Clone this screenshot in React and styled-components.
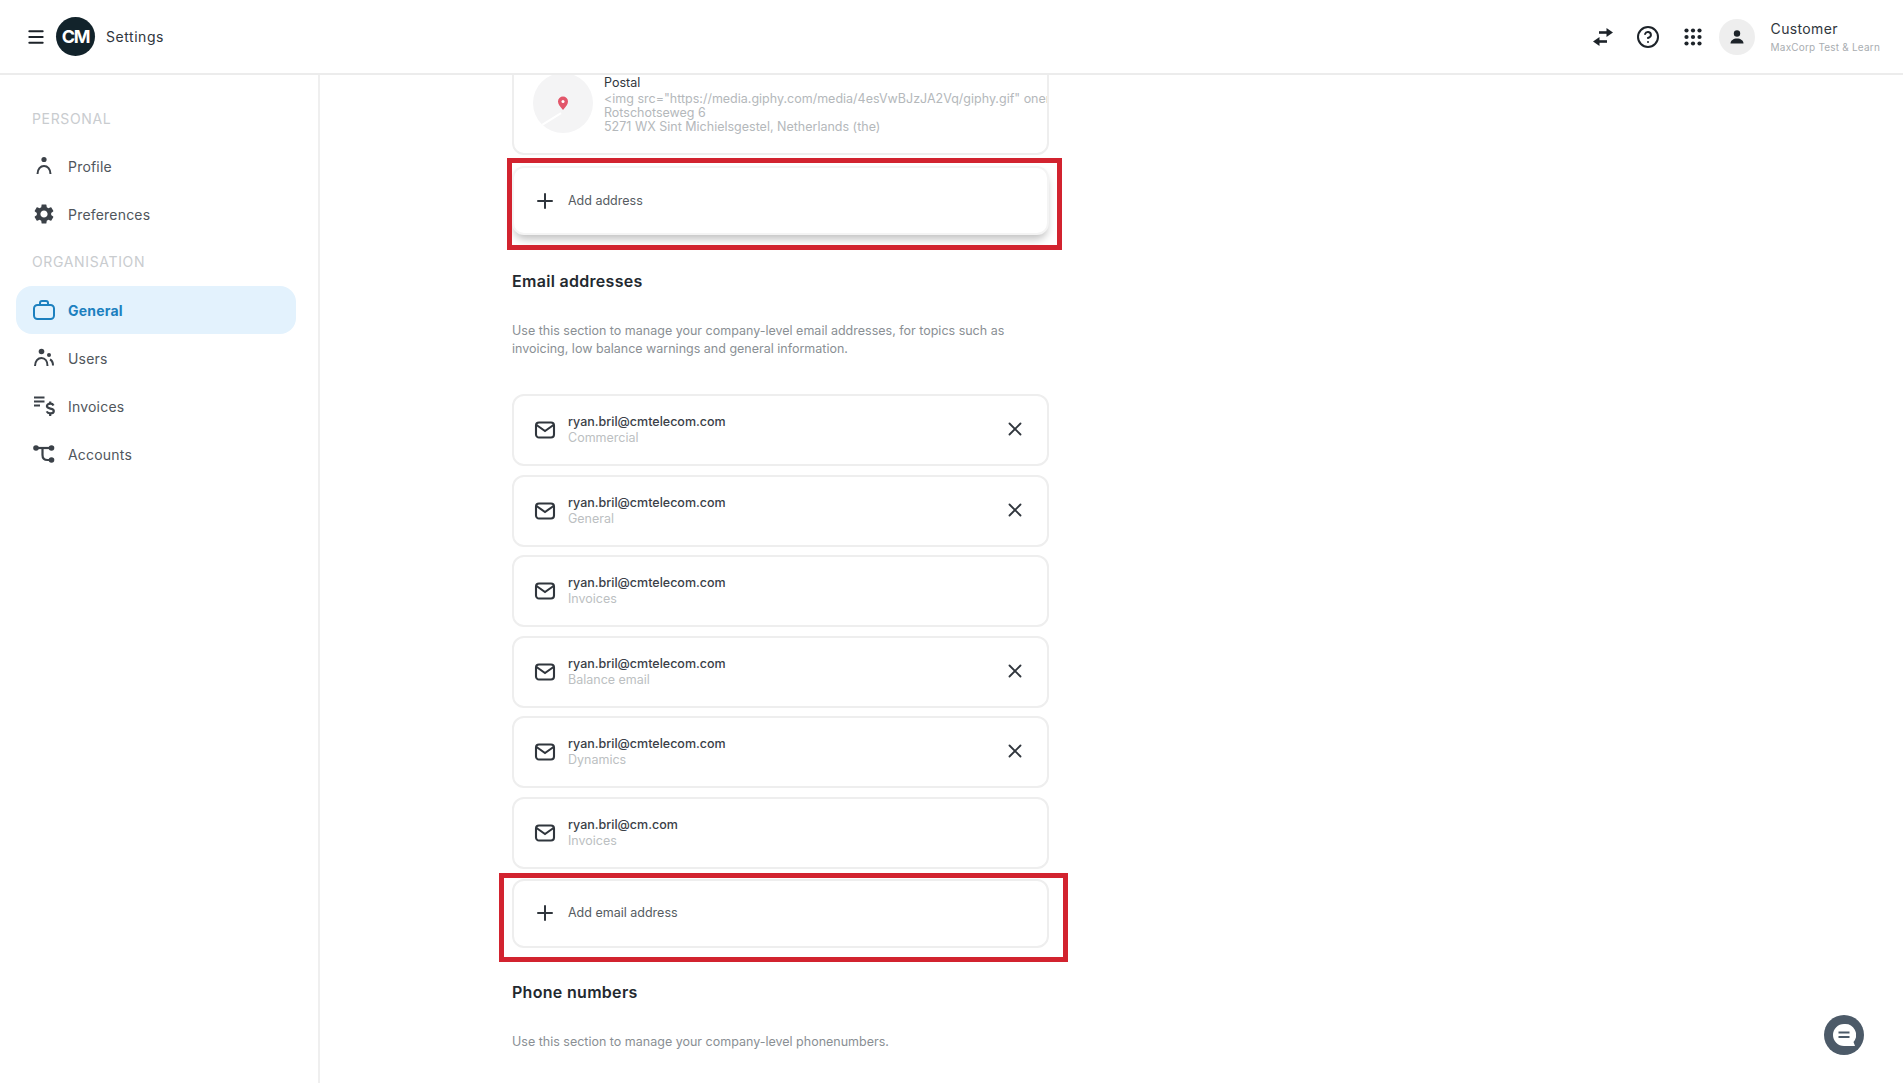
import React from "react";
import styled, { createGlobalStyle } from "styled-components";
import { Plus, X, CircleHelp, Menu } from "lucide-react";
import { MdSettings } from "react-icons/md";

const GlobalStyle = createGlobalStyle`
  html, body {
    margin: 0;
    height: 100%;
    overflow: hidden;
    background: #fff;
    font-family: Inter, "Noto Sans", sans-serif;
    color: #30363d;
  }
  * { box-sizing: border-box; }
`;

const Page = styled.div`
  height: 1083px;
  display: flex;
  flex-direction: column;
  overflow: hidden;
`;

const Header = styled.header`
  height: 75px;
  flex: none;
  display: flex;
  align-items: center;
  padding: 0 23px 0 26px;
  border-bottom: 2px solid #ececec;
`;

const MenuButton = styled.div`
  width: 20px;
  display: flex;
  color: #1d2329;
  margin-right: 10px;
`;

const Logo = styled.div`
  width: 39px;
  height: 39px;
  border-radius: 50%;
  background: #12232b;
  color: #fff;
  font-size: 18px;
  font-weight: 700;
  letter-spacing: -1.2px;
  display: flex;
  align-items: center;
  justify-content: center;
  margin-right: 11px;
`;

const AppName = styled.span`
  font-size: 14px;
  letter-spacing: 0.55px;
  color: #30363d;
`;

const HeaderRight = styled.div`
  margin-left: auto;
  display: flex;
  align-items: center;
`;

const HeaderIcon = styled.div`
  width: 45px;
  display: flex;
  justify-content: center;
  color: #1d2329;
`;

const Avatar = styled.div`
  width: 36px;
  height: 36px;
  border-radius: 50%;
  background: #eeeeee;
  display: flex;
  align-items: center;
  justify-content: center;
  margin: 0 16px 0 3px;
`;

const UserBlock = styled.div`
  display: flex;
  flex-direction: column;
  gap: 4px;
`;

const UserName = styled.span`
  font-size: 14px;
  letter-spacing: 0.35px;
  color: #30363d;
`;

const UserOrg = styled.span`
  font-size: 10px;
  letter-spacing: 0.2px;
  color: #a9adb1;
`;

const Body = styled.div`
  flex: 1;
  display: flex;
  min-height: 0;
`;

const Sidebar = styled.nav`
  width: 320px;
  flex: none;
  border-right: 2px solid #efefef;
  padding: 35px 22px 0 16px;
`;

const GroupLabel = styled.div`
  font-size: 14px;
  line-height: 18px;
  letter-spacing: 0.65px;
  color: #c9cccf;
  padding-left: 16px;
  margin-bottom: ${({ $tight }) => ($tight ? "15px" : "14px")};
  margin-top: ${({ $tight }) => ($tight ? "15px" : "0")};
`;

const NavItem = styled.div`
  height: 48px;
  display: flex;
  align-items: center;
  padding-left: 16px;
  gap: 12px;
  border-radius: 16px;
  font-size: 14px;
  letter-spacing: 0.2px;
  background: ${({ $active }) => ($active ? "#e3f2fd" : "transparent")};
  color: ${({ $active }) => ($active ? "#1c80bf" : "#50565c")};
  font-weight: ${({ $active }) => ($active ? 700 : 400)};
`;

const NavIcon = styled.span`
  width: 24px;
  height: 24px;
  display: flex;
  align-items: center;
  justify-content: center;
  color: ${({ $active }) => ($active ? "#1c80bf" : "#3b4148")};
`;

const Main = styled.main`
  flex: 1;
  min-width: 0;
  overflow: hidden;
  padding-left: 192px;
`;

const Column = styled.div`
  width: 537px;
  margin-top: -24px;
`;

const Card = styled.div`
  position: relative;
  height: ${({ $height }) => $height || "72px"};
  border: 2px solid #eeeeee;
  border-radius: 12px;
  background: #fff;
  display: flex;
  align-items: center;
  padding: 0 19px;
`;

const PostalCard = styled(Card)`
  padding: 0 0 0 19px;
  overflow: hidden;
  margin-bottom: 11px;
`;

const RaisedCard = styled(Card)`
  border-color: #f4f4f4;
  box-shadow: 0 6px 8px -2px rgba(0, 0, 0, 0.25);
`;

const MapCircle = styled.div`
  position: relative;
  width: 60px;
  height: 60px;
  flex: none;
  border-radius: 50%;
  background: #f4f4f5;
  overflow: hidden;
  display: flex;
  align-items: center;
  justify-content: center;
  margin-right: 11px;

  &::after {
    content: "";
    position: absolute;
    left: 4px;
    top: 46px;
    width: 26px;
    height: 2px;
    background: #fff;
    transform: rotate(-32deg);
  }
`;

const PostalText = styled.div`
  min-width: 0;
  white-space: nowrap;
  font-size: 12.5px;
  line-height: 14px;
  color: #b4b8bb;
  padding-top: 3px;
`;

const PostalTitle = styled.div`
  color: #30363d;
  font-size: 12.5px;
  margin-bottom: 2px;
`;

const CardIcon = styled.span`
  width: 24px;
  height: 24px;
  flex: none;
  display: flex;
  align-items: center;
  justify-content: center;
  color: #30363d;
  margin-right: 11px;
`;

const AddLabel = styled.span`
  font-size: 12.5px;
  color: #565c62;
  padding-bottom: ${({ $lift }) => ($lift ? "2px" : "0")};
`;

const Highlight = styled.div`
  position: absolute;
  top: ${({ $top }) => $top}px;
  right: ${({ $right }) => $right}px;
  bottom: ${({ $bottom }) => $bottom}px;
  left: ${({ $left }) => $left}px;
  border: 5px solid #d2232f;
  pointer-events: none;
`;

const Heading = styled.h2`
  margin: ${({ $top }) => $top}px 0 30px;
  font-size: 16px;
  line-height: 22px;
  font-weight: 600;
  letter-spacing: 0.3px;
  color: #23292f;
`;

const Description = styled.p`
  margin: 0 0 36px;
  font-size: 12.5px;
  line-height: 18px;
  color: #8a8f94;
`;

const EmailList = styled.div`
  display: flex;
  flex-direction: column;
  gap: 8.6px;
  margin-bottom: 10px;
`;

const EmailText = styled.div`
  flex: 1;
  display: flex;
  flex-direction: column;
  gap: 1px;
  padding-bottom: 1px;
`;

const EmailAddress = styled.span`
  font-size: 12.5px;
  line-height: 15px;
  font-weight: 500;
  color: #3a4047;
`;

const EmailType = styled.span`
  font-size: 12.5px;
  line-height: 15px;
  color: #bcbfc2;
`;

const RemoveButton = styled.span`
  display: flex;
  color: #30363d;
  margin: 0 2px 2px 0;
`;

const ChatButton = styled.div`
  position: fixed;
  left: 1824px;
  top: 1015px;
  width: 40px;
  height: 40px;
  border-radius: 50%;
  background: #4c5a68;
  display: flex;
  align-items: center;
  justify-content: center;
`;

const SwapIcon = () => (
  <svg width="20" height="20" viewBox="0 0 20 20" fill="none" stroke="currentColor" strokeWidth="2.6">
    <path d="M6 5.500h9" />
    <path d="M14 14.500H5" />
    <path d="M13.500 1l6.500 4.500-6.500 4.500z" fill="currentColor" strokeWidth="0" />
    <path d="M6.500 10L0 14.500 6.500 19z" fill="currentColor" strokeWidth="0" />
  </svg>
);

const GridIcon = () => (
  <svg width="18" height="18" viewBox="0 0 18 18" fill="currentColor">
    {[2.5, 9, 15.5].flatMap((y) =>
      [2.5, 9, 15.5].map((x) => <circle key={`${x}-${y}`} cx={x} cy={y} r="2.1" />)
    )}
  </svg>
);

const SolidUserIcon = () => (
  <svg width="18" height="18" viewBox="0 0 18 18" fill="#1d2329">
    <circle cx="9" cy="5.500" r="3.200" />
    <path d="M2.500 15.500c0-3 3-5 6.500-5s6.500 2 6.500 5z" />
  </svg>
);

const PersonIcon = () => (
  <svg width="22" height="22" viewBox="0 0 22 22" fill="none" stroke="currentColor" strokeWidth="2">
    <circle cx="11" cy="4.500" r="2.600" fill="currentColor" stroke="none" />
    <path d="M4.500 19c0-5 3-8 6.500-8s6.500 3 6.500 8" />
  </svg>
);

const UsersIcon = () => (
  <svg width="22" height="22" viewBox="0 0 22 22" fill="none" stroke="currentColor" strokeWidth="2">
    <circle cx="8.500" cy="4.500" r="2.800" fill="currentColor" stroke="none" />
    <circle cx="16" cy="8" r="2" fill="currentColor" stroke="none" />
    <path d="M2 19c0-5 3-8 6.500-8s6 3 6 8" />
    <path d="M17 12.500c2 1 3 3.500 3 6" />
  </svg>
);

const InvoiceIcon = () => (
  <svg width="22" height="24" viewBox="0 0 22 24" fill="none" stroke="currentColor" strokeWidth="2">
    <path d="M1 3.500h10.500M1 7.500h10.500M1 11.500h6" />
    <path d="M20.500 11.500c-.5-1.200-1.700-1.800-3.300-1.800-1.900 0-3.300.9-3.300 2.400 0 3.400 6.900 1.600 6.900 4.900 0 1.500-1.500 2.400-3.500 2.400-1.700 0-3-.7-3.600-2" strokeWidth="2.200" />
    <path d="M17.200 7.500v2.200M17.200 19.800V22" strokeWidth="2.200" />
  </svg>
);

const AccountsIcon = () => (
  <svg width="22" height="22" viewBox="0 0 22 22" fill="none" stroke="currentColor" strokeWidth="2.200">
    <circle cx="3" cy="5" r="2.800" fill="currentColor" stroke="none" />
    <circle cx="18.500" cy="5" r="2.800" fill="currentColor" stroke="none" />
    <circle cx="18.500" cy="17" r="2.800" fill="currentColor" stroke="none" />
    <path d="M3 5h15.500" />
    <path d="M9.500 5v7c0 3 2 5 5 5h4" />
  </svg>
);

const BriefcaseIcon = () => (
  <svg width="22" height="22" viewBox="0 0 22 22" fill="none" stroke="currentColor" strokeWidth="2">
    <rect x="1" y="6" width="20" height="14" rx="3.500" />
    <path d="M7 6V4c0-1 .7-2 2-2h4c1.300 0 2 1 2 2v2" />
  </svg>
);

const MailIcon = () => (
  <svg width="22" height="22" viewBox="0 0 22 22" fill="none" stroke="currentColor" strokeWidth="2.100">
    <rect x="2" y="3.500" width="18" height="15" rx="3" />
    <path d="M2.500 6l8.500 6 8.500-6" />
  </svg>
);

const PinIcon = () => (
  <svg width="12" height="14" viewBox="0 0 12 14">
    <path d="M6 14C3 10.500 1 8.500 1 5.500a5 5 0 0 1 10 0C11 8.500 9 10.500 6 14z" fill="#e2566a" />
    <circle cx="6" cy="5.500" r="1.500" fill="#fff" />
  </svg>
);

const ChatIcon = () => (
  <svg width="24" height="24" viewBox="0 0 24 24">
    <path d="M12 1a11 11 0 1 0 0 22h11l-1.500-4A11 11 0 0 0 12 1z" fill="#fff" />
    <path d="M6.500 9.500h11M6.500 14h11" stroke="#4c5a68" strokeWidth="2.200" />
  </svg>
);

const emails = [
  { address: "ryan.bril@cmtelecom.com", type: "Commercial", removable: true },
  { address: "ryan.bril@cmtelecom.com", type: "General", removable: true },
  { address: "ryan.bril@cmtelecom.com", type: "Invoices", removable: false },
  { address: "ryan.bril@cmtelecom.com", type: "Balance email", removable: true },
  { address: "ryan.bril@cmtelecom.com", type: "Dynamics", removable: true },
  { address: "ryan.bril@cm.com", type: "Invoices", removable: false },
];

const App = () => {
  return (
    <Page>
      <GlobalStyle />
      <Header>
        <MenuButton>
          <Menu size={20} strokeWidth={2.4} />
        </MenuButton>
        <Logo>CM</Logo>
        <AppName>Settings</AppName>
        <HeaderRight>
          <HeaderIcon>
            <SwapIcon />
          </HeaderIcon>
          <HeaderIcon>
            <CircleHelp size={24} strokeWidth={2} />
          </HeaderIcon>
          <HeaderIcon>
            <GridIcon />
          </HeaderIcon>
          <Avatar>
            <SolidUserIcon />
          </Avatar>
          <UserBlock>
            <UserName>Customer</UserName>
            <UserOrg>MaxCorp Test &amp; Learn</UserOrg>
          </UserBlock>
        </HeaderRight>
      </Header>
      <Body>
        <Sidebar>
          <GroupLabel>PERSONAL</GroupLabel>
          <NavItem>
            <NavIcon>
              <PersonIcon />
            </NavIcon>
            Profile
          </NavItem>
          <NavItem>
            <NavIcon>
              <MdSettings size={24} />
            </NavIcon>
            Preferences
          </NavItem>
          <GroupLabel $tight>ORGANISATION</GroupLabel>
          <NavItem $active>
            <NavIcon $active>
              <BriefcaseIcon />
            </NavIcon>
            General
          </NavItem>
          <NavItem>
            <NavIcon>
              <UsersIcon />
            </NavIcon>
            Users
          </NavItem>
          <NavItem>
            <NavIcon>
              <InvoiceIcon />
            </NavIcon>
            Invoices
          </NavItem>
          <NavItem>
            <NavIcon>
              <AccountsIcon />
            </NavIcon>
            Accounts
          </NavItem>
        </Sidebar>
        <Main>
          <Column>
            <PostalCard $height="104px">
              <MapCircle>
                <PinIcon />
              </MapCircle>
              <PostalText>
                <PostalTitle>Postal</PostalTitle>
                <div>&lt;img src="https://media.giphy.com/media/4esVwBJzJA2Vq/giphy.gif" onerror="alert(1)"&gt;</div>
                <div>Rotschotseweg 6</div>
                <div>5271 WX Sint Michielsgestel, Netherlands (the)</div>
              </PostalText>
            </PostalCard>
            <RaisedCard $height="69px">
              <CardIcon>
                <Plus size={24} strokeWidth={2} />
              </CardIcon>
              <AddLabel>Add address</AddLabel>
              <Highlight $top={-10} $right={-15} $bottom={-17} $left={-7} />
            </RaisedCard>

            <Heading $top={35}>Email addresses</Heading>
            <Description>
              Use this section to manage your company-level email addresses, for topics such as
              <br />
              invoicing, low balance warnings and general information.
            </Description>
            <EmailList>
              {emails.map((email, index) => (
                <Card key={index}>
                  <CardIcon>
                    <MailIcon />
                  </CardIcon>
                  <EmailText>
                    <EmailAddress>{email.address}</EmailAddress>
                    <EmailType>{email.type}</EmailType>
                  </EmailText>
                  {email.removable && (
                    <RemoveButton>
                      <X size={22} strokeWidth={2} />
                    </RemoveButton>
                  )}
                </Card>
              ))}
            </EmailList>
            <Card $height="69px">
              <CardIcon>
                <Plus size={24} strokeWidth={2} />
              </CardIcon>
              <AddLabel $lift>Add email address</AddLabel>
              <Highlight $top={-8} $right={-21} $bottom={-16} $left={-15} />
            </Card>

            <Heading $top={33}>Phone numbers</Heading>
            <Description>Use this section to manage your company-level phonenumbers.</Description>
          </Column>
        </Main>
      </Body>
      <ChatButton>
        <ChatIcon />
      </ChatButton>
    </Page>
  );
};

export default App;
